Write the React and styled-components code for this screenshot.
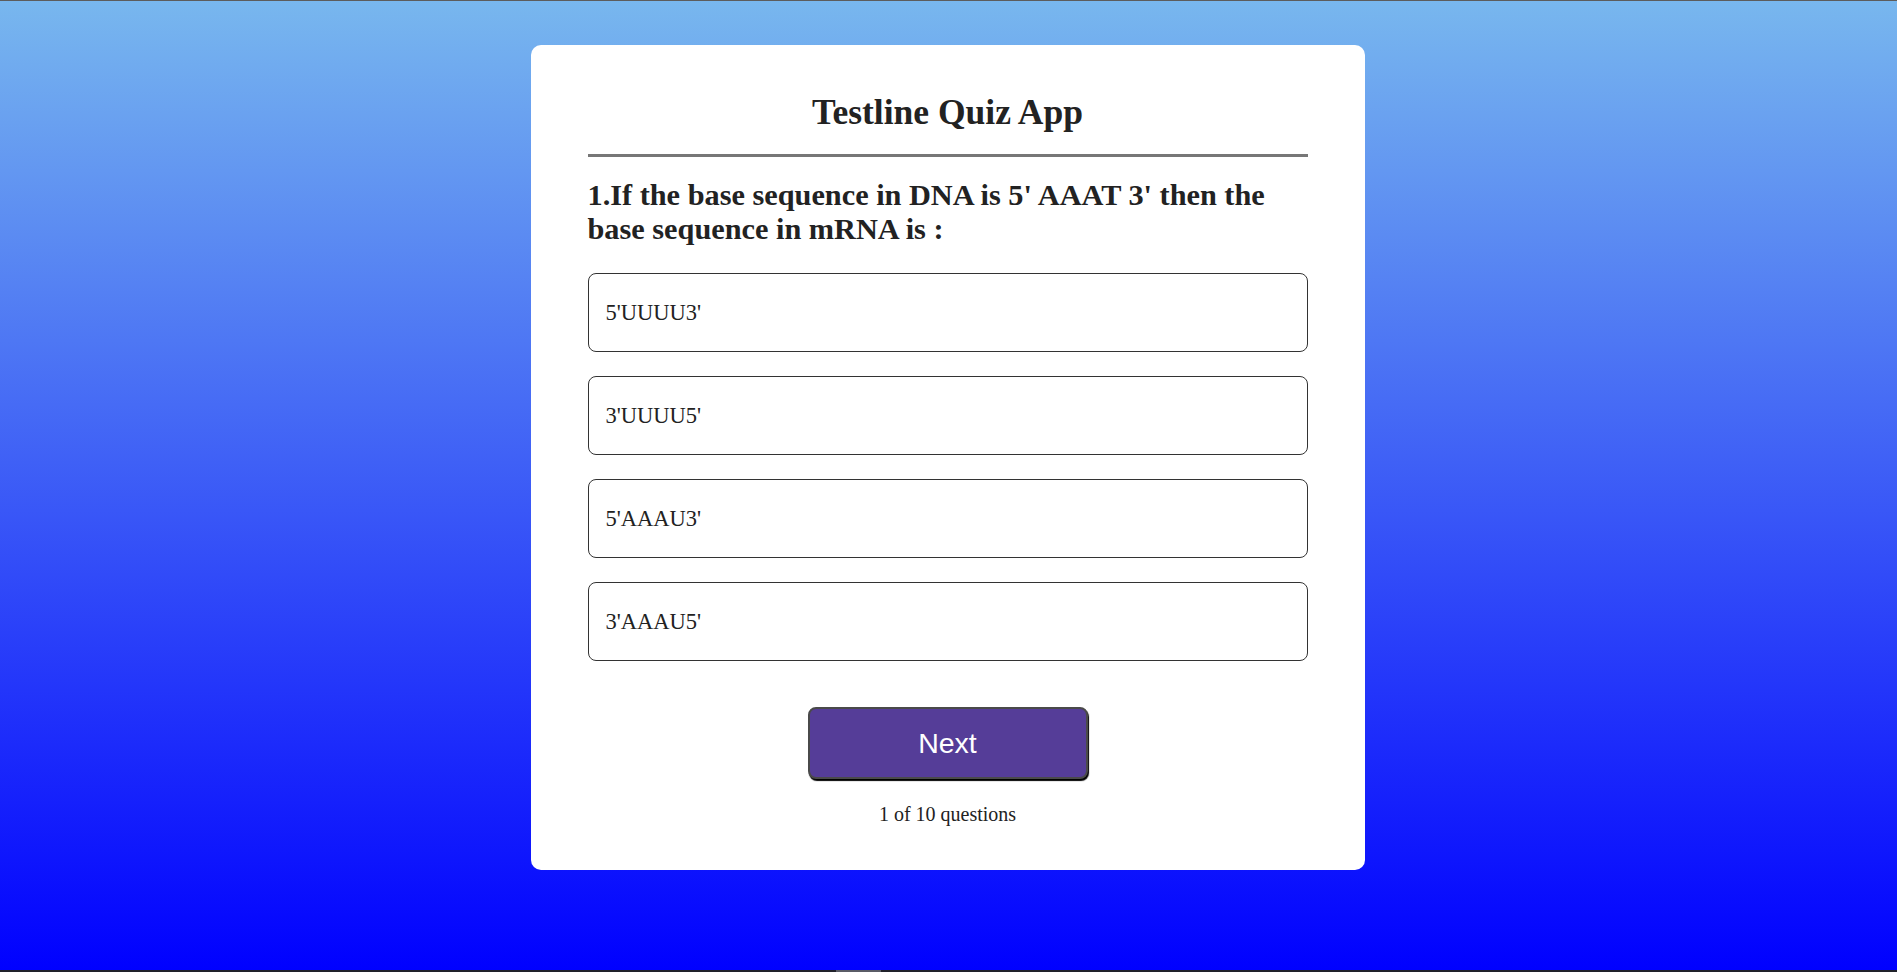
import React, { useState } from 'react';
import styled, { createGlobalStyle } from 'styled-components';

const GlobalStyle = createGlobalStyle`
  html, body {
    margin: 0;
    padding: 0;
    height: 100%;
  }
  body {
    font-family: 'Liberation Serif', 'Times New Roman', serif;
    color: #222;
  }
`;

const Page = styled.div`
  box-sizing: border-box;
  min-height: 100vh;
  display: flex;
  flex-direction: column;
  align-items: center;
  padding-top: 44px;
  padding-right: 2px;
  background: linear-gradient(to bottom, #78b7ee 0%, #0000ff 100%);
  border-top: 1px solid #5c5c5c;
`;

const Card = styled.div`
  box-sizing: border-box;
  width: 834px;
  background: #fff;
  border-radius: 10px;
  padding: 46px 57px 44px;
  display: flex;
  flex-direction: column;
`;

const Title = styled.h1`
  margin: 0;
  font-size: 35.5px;
  font-weight: 700;
  text-align: center;
  color: #222;
`;

const Divider = styled.div`
  height: 3px;
  background: #777;
  margin: 21px 0 21px;
`;

const Question = styled.h2`
  margin: 0 0 27px;
  font-size: 30.3px;
  font-weight: 700;
  line-height: 34px;
  color: #222;
`;

const Options = styled.ul`
  list-style: none;
  margin: 0;
  padding: 0;
  display: flex;
  flex-direction: column;
  gap: 24px;
`;

const Option = styled.li`
  box-sizing: border-box;
  height: 79px;
  display: flex;
  align-items: center;
  padding: 0 17px;
  border: 1px solid ${(p) => (p.$active ? '#553c9a' : '#333')};
  border-radius: 8px;
  font-size: 22.5px;
  color: #222;
  cursor: pointer;
`;

const Footer = styled.div`
  display: flex;
  flex-direction: column;
  align-items: center;
  margin-top: 46px;
  gap: 24px;
`;

const NextButton = styled.button`
  box-sizing: border-box;
  width: 280px;
  height: 72px;
  background: #553d98;
  color: #fff;
  border: 2px solid #4a4a4a;
  border-radius: 8px;
  box-shadow: 1px 2px 1px #000;
  font-family: 'Liberation Sans', Arial, sans-serif;
  font-size: 28.5px;
  cursor: pointer;
`;

const Counter = styled.div`
  font-size: 20px;
  color: #222;
`;

const BottomBar = styled.div`
  position: fixed;
  left: 0;
  right: 0;
  bottom: 0;
  height: 2px;
  background: #20222a;
`;

const Thumb = styled.div`
  position: absolute;
  left: 836px;
  width: 45px;
  top: 0;
  bottom: 0;
  background: #5a5c66;
`;

const options = ["5'UUUU3'", "3'UUUU5'", "5'AAAU3'", "3'AAAU5'"];

const App = () => {
  const [selected, setSelected] = useState(null);

  return (
    <>
      <GlobalStyle />
      <Page>
        <Card>
          <Title>Testline Quiz App</Title>
          <Divider />
          <Question>1.If the base sequence in DNA is 5' AAAT 3' then the base sequence in mRNA is :</Question>
          <Options>
            {options.map((opt, i) => (
              <Option key={i} $active={selected === i} onClick={() => setSelected(i)}>
                {opt}
              </Option>
            ))}
          </Options>
          <Footer>
            <NextButton>Next</NextButton>
            <Counter>1 of 10 questions</Counter>
          </Footer>
        </Card>
      </Page>
      <BottomBar>
        <Thumb />
      </BottomBar>
    </>
  );
};

export default App;
